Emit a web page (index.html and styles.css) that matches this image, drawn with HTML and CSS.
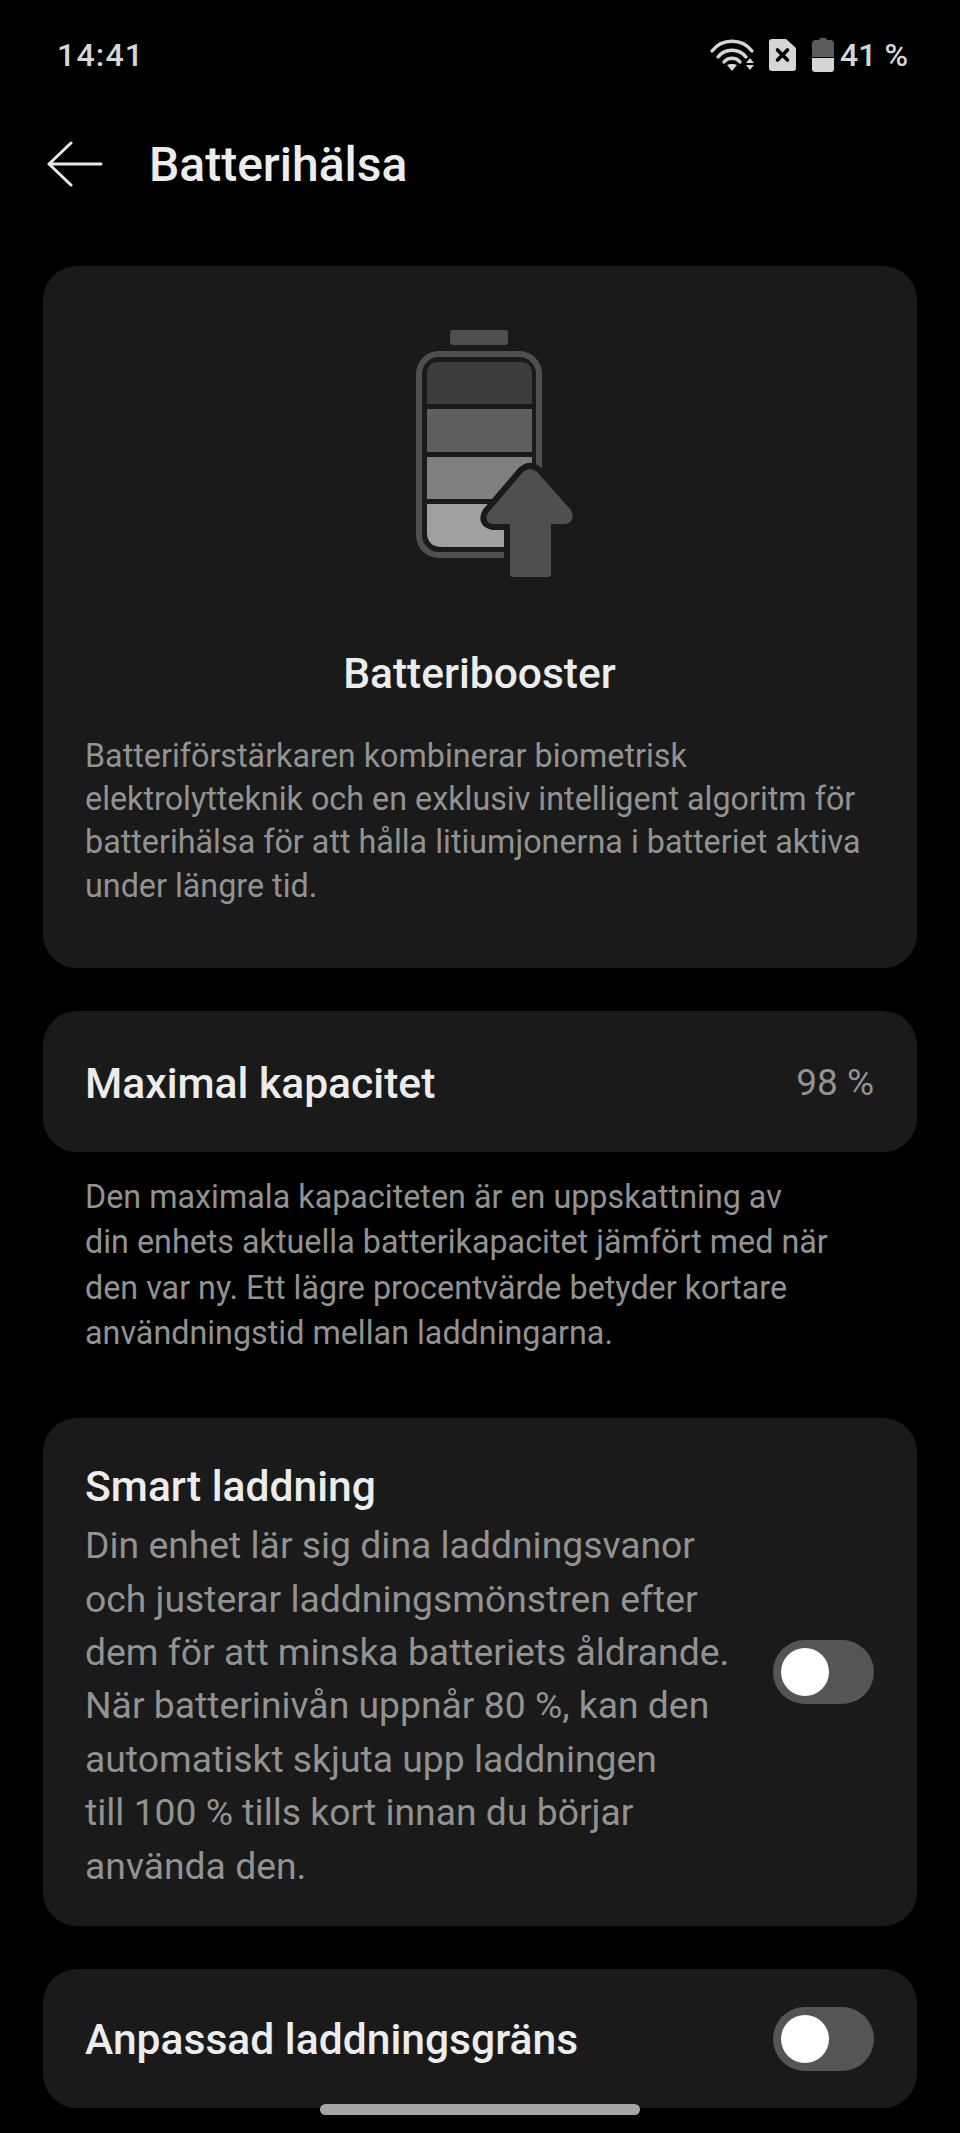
FILE: index.html
```html
<!DOCTYPE html>
<html lang="sv">
<head>
  <meta charset="UTF-8" />
  <title>Batterihälsa</title>
  <link rel="stylesheet" href="styles.css">
</head>
<body>
  <div class="screen">
    <!-- Status bar -->
    <div class="status-bar">
      <span class="clock">14:41</span>
      <div class="status-icons">
        <svg class="wifi" viewBox="0 0 46 32" width="46" height="32" aria-hidden="true">
          <g fill="none" stroke="#d6d6d6" stroke-width="3.4" stroke-linecap="round">
            <path d="M3 12 C13 -1 33 -1 43 12" />
            <path d="M9 18 C16 9 30 9 37 18" />
            <path d="M15 23 C19 18 27 18 31 23" />
          </g>
          <path d="M18 26 C20 24.5 26 24.5 28 26 L23 32 Z" fill="#d6d6d6" />
          <path d="M41 19 L45 24 L37 24 Z M37 26 L45 26 L41 31 Z" fill="#d6d6d6" />
        </svg>
        <svg class="sim" viewBox="0 0 27 32" width="27" height="32" aria-hidden="true">
          <path d="M3 0 H17 L27 9 V29 Q27 32 24 32 H3 Q0 32 0 29 V3 Q0 0 3 0 Z" fill="#d6d6d6" />
          <path d="M8.5 11 L18.5 21 M18.5 11 L8.5 21" stroke="#000" stroke-width="3.6" stroke-linecap="round" />
        </svg>
        <svg class="batt" viewBox="0 0 22 34" width="22" height="34" aria-hidden="true">
          <path d="M7 2 Q7 0 9 0 H13 Q15 0 15 2 H18 Q22 2 22 6 V19 H0 V6 Q0 2 4 2 Z" fill="#5c5c5c" />
          <path d="M0 20 H22 V31 Q22 34 19 34 H3 Q0 34 0 31 Z" fill="#d6d6d6" />
        </svg>
        <span class="level">41 %</span>
      </div>
    </div>

    <!-- Header -->
    <header class="top-bar">
      <svg class="back" viewBox="0 0 56 46" width="56" height="46" aria-hidden="true">
        <path d="M24 2 L2 23 L24 44 M2 23 H54" fill="none" stroke="#e8e8e8" stroke-width="3" stroke-linecap="round" stroke-linejoin="round" />
      </svg>
      <h1>Batterihälsa</h1>
    </header>

    <main class="content">
      <section class="card booster">
        <svg class="booster-icon" viewBox="0 0 165 250" width="165" height="250" aria-hidden="true">
          <rect x="37" y="0" width="58" height="15" rx="3" fill="#4f4f4f" />
          <rect x="6" y="24" width="120" height="201" rx="20" fill="none" stroke="#4f4f4f" stroke-width="6" />
          <path d="M14 74 V44 Q14 32 26 32 H107 Q119 32 119 44 V74 Z" fill="#3d3d3d" />
          <rect x="14" y="79" width="105" height="43" fill="#5e5e5e" />
          <rect x="14" y="127" width="105" height="42" fill="#7f7f7f" />
          <path d="M14 174 H119 V217 H29 Q14 217 14 202 Z" fill="#a0a0a0" />
          <path d="M97 194 H80 Q70 192 75 183 L110 142 Q117 136 124 142 L158 180 Q163 191 153 194 H138 V244 Q138 247 135 247 H100 Q97 247 97 244 Z" fill="#1a1a1a" stroke="#1a1a1a" stroke-width="12" stroke-linejoin="round" />
          <path d="M97 194 H80 Q70 192 75 183 L110 142 Q117 136 124 142 L158 180 Q163 191 153 194 H138 V244 Q138 247 135 247 H100 Q97 247 97 244 Z" fill="#4f4f4f" />
        </svg>
        <h2 class="booster-title">Batteribooster</h2>
        <p class="desc">Batteriförstärkaren kombinerar biometrisk<br>elektrolytteknik och en exklusiv intelligent algoritm för<br>batterihälsa för att hålla litiumjonerna i batteriet aktiva<br>under längre tid.</p>
      </section>

      <section class="card row capacity">
        <span class="row-title">Maximal kapacitet</span>
        <span class="row-value">98 %</span>
      </section>
      <p class="desc note">Den maximala kapaciteten är en uppskattning av<br>din enhets aktuella batterikapacitet jämfört med när<br>den var ny. Ett lägre procentvärde betyder kortare<br>användningstid mellan laddningarna.</p>

      <section class="card row smart">
        <div class="smart-text">
          <span class="row-title">Smart laddning</span>
          <p class="smart-desc">Din enhet lär sig dina laddningsvanor<br>och justerar laddningsmönstren efter<br>dem för att minska batteriets åldrande.<br>När batterinivån uppnår 80 %, kan den<br>automatiskt skjuta upp laddningen<br>till 100 % tills kort innan du börjar<br>använda den.</p>
        </div>
        <span class="toggle"><span class="knob"></span></span>
      </section>

      <section class="card row limit">
        <span class="row-title">Anpassad laddningsgräns</span>
        <span class="toggle"><span class="knob"></span></span>
      </section>
    </main>

    <div class="home-bar"></div>
  </div>
</body>
</html>
```

FILE: styles.css
```css
* {
  box-sizing: border-box;
}
html, body {
  margin: 0;
  background: #000;
}
body {
  font-family: Roboto, "Noto Sans", sans-serif;
  color: #ececec;
}
.screen {
  position: relative;
  width: 960px;
  height: 2133px;
  overflow: hidden;
}
.status-bar {
  height: 110px;
  padding: 0 52px 0 57px;
  display: flex;
  justify-content: space-between;
  align-items: center;
}
.clock {
  font-size: 32px;
  font-weight: 500;
  letter-spacing: 1.2px;
  color: #d6d6d6;
}
.status-icons {
  display: flex;
  align-items: center;
  gap: 6px;
}
.sim {
  margin-left: 8px;
}
.batt {
  margin-left: 10px;
}
.level {
  font-size: 32px;
  font-weight: 500;
  color: #d6d6d6;
}
.top-bar {
  height: 56px;
  margin-top: 26px;
  padding-left: 47px;
  display: flex;
  align-items: center;
  gap: 46px;
}
.top-bar h1 {
  margin: 0;
  font-size: 48px;
  font-weight: 500;
  color: #ececec;
}
.content {
  margin-top: 74px;
  padding: 0 43px;
}
.card {
  background: #1a1a1a;
  border-radius: 34px;
}
.booster {
  height: 702px;
  padding: 64px 43px 0 42px;
  display: flex;
  flex-direction: column;
  align-items: center;
}
.booster-icon {
  margin-left: 32px;
}
.booster-title {
  margin: 69px 0 37px;
  font-size: 42.5px;
  font-weight: 500;
  color: #ececec;
}
.desc {
  margin: 0;
  width: 100%;
  font-size: 32.3px;
  line-height: 43.2px;
  color: #929292;
}
.row {
  display: flex;
  align-items: center;
  justify-content: space-between;
  padding: 0 43px 0 42px;
}
.capacity {
  margin-top: 43px;
  height: 141px;
  padding-top: 2px;
}
.row-title {
  font-size: 42.6px;
  font-weight: 500;
  color: #ececec;
}
.row-value {
  font-size: 37px;
  color: #929292;
}
.note {
  padding: 23px 43px 0 42px;
  line-height: 45.3px;
}
.smart {
  margin-top: 62px;
  height: 508px;
}
.smart-text {
  display: flex;
  flex-direction: column;
  padding-top: 10px;
}
.smart-desc {
  margin: 8px 0 0;
  font-size: 37.3px;
  line-height: 53.4px;
  color: #929292;
}
.limit {
  margin-top: 43px;
  height: 139px;
}
.toggle {
  display: block;
  flex: none;
  width: 101px;
  height: 64px;
  padding: 8px;
  border-radius: 32px;
  background: #555;
}
.knob {
  display: block;
  width: 48px;
  height: 48px;
  border-radius: 50%;
  background: #fff;
}
.home-bar {
  position: absolute;
  left: 320px;
  top: 2104px;
  width: 320px;
  height: 11px;
  border-radius: 6px;
  background: #a6a6a6;
}
```
